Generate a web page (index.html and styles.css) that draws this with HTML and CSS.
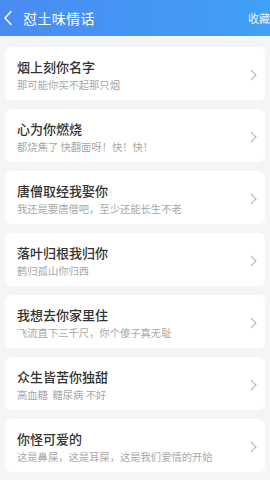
FILE: index.html
```html
<!DOCTYPE html>
<html lang="zh">
<head>
<meta charset="utf-8">
<link rel="stylesheet" href="styles.css">
</head>
<body>
<header class="bar">
  <svg class="back" width="10" height="16" viewBox="0 0 10 16"><path d="M8 1.5 L2 8 L8 14.5" fill="none" stroke="#fff" stroke-width="1.4" stroke-linecap="round" stroke-linejoin="round"/></svg>
  <span class="title">怼土味情话</span>
  <span class="fav">收藏</span>
</header>
<main class="list">
  <div class="card"><div class="txt"><div class="t">烟上刻你名字</div><div class="s">那可能你买不起那只烟</div></div><svg class="chev" width="7" height="12" viewBox="0 0 7 12"><path d="M1 1 L6 6 L1 11" fill="none" stroke="#bbbbbb" stroke-width="1.1"/></svg></div>
  <div class="card"><div class="txt"><div class="t">心为你燃烧</div><div class="s">都烧焦了 快翻面呀！快！快！</div></div><svg class="chev" width="7" height="12" viewBox="0 0 7 12"><path d="M1 1 L6 6 L1 11" fill="none" stroke="#bbbbbb" stroke-width="1.1"/></svg></div>
  <div class="card"><div class="txt"><div class="t">唐僧取经我娶你</div><div class="s">我还是要唐僧吧，至少还能长生不老</div></div><svg class="chev" width="7" height="12" viewBox="0 0 7 12"><path d="M1 1 L6 6 L1 11" fill="none" stroke="#bbbbbb" stroke-width="1.1"/></svg></div>
  <div class="card"><div class="txt"><div class="t">落叶归根我归你</div><div class="s">鹤归孤山你归西</div></div><svg class="chev" width="7" height="12" viewBox="0 0 7 12"><path d="M1 1 L6 6 L1 11" fill="none" stroke="#bbbbbb" stroke-width="1.1"/></svg></div>
  <div class="card"><div class="txt"><div class="t">我想去你家里住</div><div class="s">飞流直下三千尺，你个傻子真无耻</div></div><svg class="chev" width="7" height="12" viewBox="0 0 7 12"><path d="M1 1 L6 6 L1 11" fill="none" stroke="#bbbbbb" stroke-width="1.1"/></svg></div>
  <div class="card"><div class="txt"><div class="t">众生皆苦你独甜</div><div class="s">高血糖&nbsp;&nbsp;糖尿病 不好</div></div><svg class="chev" width="7" height="12" viewBox="0 0 7 12"><path d="M1 1 L6 6 L1 11" fill="none" stroke="#bbbbbb" stroke-width="1.1"/></svg></div>
  <div class="card"><div class="txt"><div class="t">你怪可爱的</div><div class="s">这是鼻屎，这是耳屎，这是我们爱情的开始</div></div><svg class="chev" width="7" height="12" viewBox="0 0 7 12"><path d="M1 1 L6 6 L1 11" fill="none" stroke="#bbbbbb" stroke-width="1.1"/></svg></div>
</main>
</body>
</html>
```

FILE: styles.css
```css
* { box-sizing: border-box; }
html, body { margin: 0; padding: 0; }
body {
  width: 270px;
  height: 480px;
  overflow: hidden;
  background: #f4f5f7;
  font-family: "Noto Sans CJK SC", "Noto Sans", sans-serif;
}
.bar {
  height: 36px;
  display: flex;
  align-items: center;
  background: linear-gradient(90deg, #4a8bf1 0%, #41a0f6 100%);
  color: #fff;
  padding-left: 3px;
  white-space: nowrap;
  overflow: hidden;
}
.back { flex: none; }
.title {
  margin-left: 10px;
  font-size: 14px;
  letter-spacing: 0.4px;
  line-height: 20px;
}
.fav {
  margin-left: auto;
  margin-right: 0;
  font-size: 11px;
  line-height: 16px;
  opacity: 0.9;
}
.list {
  display: flex;
  flex-direction: column;
  gap: 9px;
  padding: 11px 5px 0;
}
.card {
  height: 53px;
  background: #fff;
  border-radius: 6px;
  display: flex;
  align-items: center;
  padding: 0 12px;
}
.txt { flex: 1; min-width: 0; padding-top: 1px; }
.t {
  font-size: 13px;
  line-height: 17px;
  color: #333;
  font-weight: 500;
}
.s {
  margin-top: 3px;
  font-size: 10.3px;
  line-height: 13px;
  color: #a8a8a8;
  white-space: nowrap;
}
.chev { flex: none; margin-right: -4px; margin-top: 2px; }
```
